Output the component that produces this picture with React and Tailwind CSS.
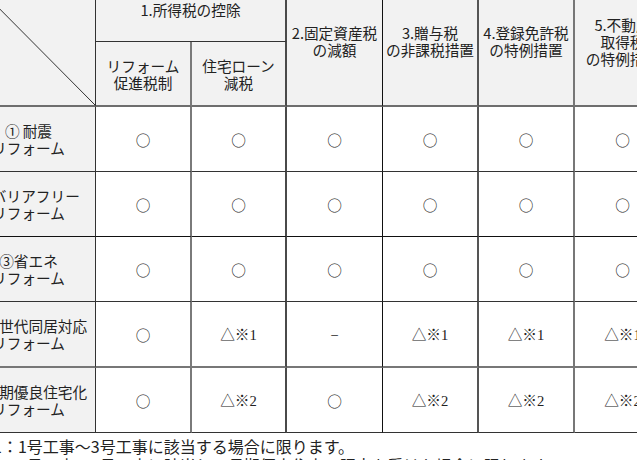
import React from "react";

const gothic = "font-['Noto_Sans_CJK_JP','Noto_Sans',sans-serif]";

// right border of each column (label, 1a, 1b, 2, 3, 4, 5)
const colBorder = [
  "border-r border-r-[#333]",
  "border-r-2 border-r-[#7a7a7a]",
  "border-r-2 border-r-[#4a4a4a]",
  "border-r border-r-[#111]",
  "border-r-2 border-r-[#555]",
  "border-r-2 border-r-[#777]",
  "border-r border-r-[#555]",
];

// bottom border of each body row
const rowBorder = [
  "border-b border-b-[#333]",
  "border-b border-b-[#111]",
  "border-b border-b-[#333]",
  "border-b-2 border-b-[#777]",
  "border-b border-b-[#333]",
];

const headBottom = "border-b-2 border-b-[#6e6e6e]";

const rows = [
  { label: ["①\u2009耐震", "リフォーム"], cells: ["○", "○", "○", "○", "○", "○"] },
  { label: ["②バリアフリー", "リフォーム"], cells: ["○", "○", "○", "○", "○", "○"] },
  { label: ["③省エネ", "リフォーム"], cells: ["○", "○", "○", "○", "○", "○"] },
  { label: ["④三世代同居対応", "リフォーム"], cells: ["○", "△※1", "−", "△※1", "△※1", "△※1"] },
  { label: ["⑤長期優良住宅化", "リフォーム"], cells: ["○", "△※2", "○", "△※2", "△※2", "△※2"] },
];

const taxHeads = [
  ["2.固定資産税", "の減額"],
  ["3.贈与税", "の非課税措置"],
  ["4.登録免許税", "の特例措置"],
  ["5.不動産", "取得税", "の特例措置"],
];

function Lines({ lines }) {
  return lines.map((l, i) => (
    <span key={i} className="block whitespace-nowrap">
      {l}
    </span>
  ));
}

// marks in the gothic face, digits and the dash in a serif face
function Mark({ value }) {
  const m = value.match(/^(.*?)([0-9−]*)$/);
  return (
    <span className="whitespace-nowrap">
      {m[1]}
      {m[2] && <span className="font-['Liberation_Serif',serif]">{m[2]}</span>}
    </span>
  );
}

export default function App() {
  return (
    <div className="relative w-[637px] h-[460px] overflow-hidden bg-white text-[#222]">
      <div className="ml-[-32px] mt-[-23px]">
        <div
          className={`grid grid-cols-[128px_96px_95px_96px_96px_96px_96px] grid-rows-[65px_65px_65px_65px_65px_66px_65px] text-[14.67px] leading-[17px] ${gothic}`}
        >
          {/* corner */}
          <div className={`relative row-span-2 bg-[#f2f2f2] ${colBorder[0]} ${headBottom}`}>
            <svg className="absolute inset-0 w-full h-full" preserveAspectRatio="none">
              <line x1="0" y1="0" x2="100%" y2="100%" stroke="#333" strokeWidth="1" />
            </svg>
          </div>

          <div
            className={`col-span-2 flex items-center justify-center bg-[#f2f2f2] border-b border-b-[#333] ${colBorder[2]}`}
          >
            1.所得税の控除
          </div>

          {taxHeads.map((h, i) => (
            <div
              key={i}
              className={`row-span-2 flex flex-col items-center justify-center text-center bg-[#f2f2f2] ${colBorder[i + 3]} ${headBottom}`}
            >
              <Lines lines={h} />
            </div>
          ))}

          <div
            className={`flex flex-col items-center justify-center text-center bg-[#f2f2f2] ${colBorder[1]} ${headBottom}`}
          >
            <Lines lines={["リフォーム", "促進税制"]} />
          </div>
          <div
            className={`flex flex-col items-center justify-center text-center bg-[#f2f2f2] ${colBorder[2]} ${headBottom}`}
          >
            <Lines lines={["住宅ローン", "減税"]} />
          </div>

          {rows.map((r, ri) => (
            <React.Fragment key={ri}>
              <div
                className={`flex flex-col items-center justify-center text-center pr-[6px] bg-[#f2f2f2] ${colBorder[0]} ${rowBorder[ri]}`}
              >
                <Lines lines={r.label} />
              </div>
              {r.cells.map((c, ci) => (
                <div
                  key={ci}
                  className={`flex items-center justify-center bg-white ${colBorder[ci + 1]} ${rowBorder[ri]}`}
                >
                  <Mark value={c} />
                </div>
              ))}
            </React.Fragment>
          ))}
        </div>

        <div className={`ml-[9px] mt-[4px] text-[16px] leading-[19px] whitespace-nowrap ${gothic}`}>
          <p>※1：1号工事～3号工事に該当する場合に限ります。</p>
          <p>※2：1号工事～3号工事に該当し、長期優良住宅の認定を受けた場合に限ります。</p>
        </div>
      </div>
    </div>
  );
}
